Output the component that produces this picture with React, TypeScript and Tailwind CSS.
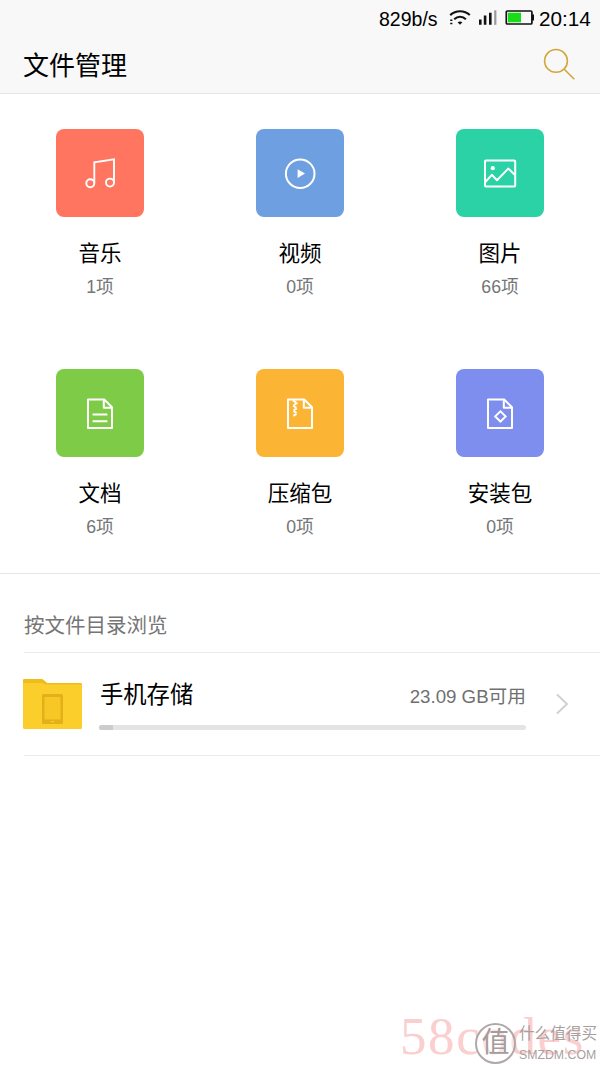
import type { ReactNode } from 'react';

const storage = { name: '手机存储', free: '23.09 GB可用', used: 3.2 };

function FileOutline({ children }: { children?: ReactNode }) {
  return (
    <svg width="36" height="36" viewBox="0 0 36 36" fill="none" stroke="white" strokeWidth="2" strokeLinejoin="round">
      <path d="M6 4.5H22.2L30 12.3V32.9H6Z" />
      <path d="M21.8 4.8V12.7H29.8" />
      {children}
    </svg>
  );
}

const MusicIcon = () => (
  <svg width="36" height="36" viewBox="0 0 36 36" fill="none" stroke="white" strokeWidth="1.9">
    <circle cx="8.3" cy="28.3" r="4" />
    <circle cx="28" cy="27.6" r="4" />
    <path d="M12.3 28.3V7.2L32 4.3V27.6" />
  </svg>
);

const VideoIcon = () => (
  <svg width="36" height="36" viewBox="0 0 36 36" fill="none">
    <circle cx="18.2" cy="18.7" r="14.3" stroke="white" strokeWidth="2" />
    <path d="M15.6 14.2L23 18.6L15.6 23Z" fill="white" />
  </svg>
);

const ImageIcon = () => (
  <svg width="36" height="36" viewBox="0 0 36 36" fill="none" stroke="white" strokeWidth="2" strokeLinejoin="round">
    <rect x="3" y="5.6" width="30.2" height="26" rx="1" />
    <path d="M3.5 26.8L9.8 19.8L15 25.2L26.2 13.6L33 20" />
    <circle cx="10.8" cy="13.2" r="2.1" fill="white" stroke="none" />
  </svg>
);

const DocIcon = () => (
  <FileOutline>
    <path d="M10.6 19.4H25.4M10.6 26.3H25.4" />
  </FileOutline>
);

const ZipIcon = () => (
  <FileOutline>
    <path d="M10.8 5.4L15 8L11 10.6L15 13.2L11 15.8L15 18.4L11.4 20.8" strokeWidth="2" strokeDasharray="3.9 1" />
  </FileOutline>
);

const ApkIcon = () => (
  <FileOutline>
    <path d="M18.4 16.3L23.6 21.4L18.4 26.5L13.2 21.4Z" strokeLinejoin="miter" />
  </FileOutline>
);

const categories = [
  { name: '音乐', count: '1项', color: 'bg-[#ff7560]', icon: <MusicIcon /> },
  { name: '视频', count: '0项', color: 'bg-[#6e9fe0]', icon: <VideoIcon /> },
  { name: '图片', count: '66项', color: 'bg-[#2ad2a5]', icon: <ImageIcon /> },
  { name: '文档', count: '6项', color: 'bg-[#7ecb47]', icon: <DocIcon /> },
  { name: '压缩包', count: '0项', color: 'bg-[#fbb433]', icon: <ZipIcon /> },
  { name: '安装包', count: '0项', color: 'bg-[#7e8eee]', icon: <ApkIcon /> },
];

function StatusBar() {
  return (
    <div className="flex h-9 items-center pl-[379px] text-black">
      <span className="w-[70px] pt-px text-[19.5px] leading-9">829b/s</span>
      <svg width="22" height="18" viewBox="0 0 22 18" fill="none" stroke="#111" strokeWidth="2.1">
        <path d="M1.2 6.1C7 0.9 15.2 0.9 20.8 6.1" />
        <path d="M5.2 10.2C8.8 7 13.4 7 16.9 10.2" />
        <path d="M8.6 13.3Q11 11.6 13.4 13.3L11 15.8Z" fill="#111" stroke="none" />
        <path d="M1.2 11.2H3.4M1.2 14.4H3.4" strokeWidth="1.5" />
      </svg>
      <svg className="ml-[7px]" width="20" height="16" viewBox="0 0 20 16">
        <path d="M1 9.5H3.6V14.8H1ZM5.8 5.5H8.4V14.8H5.8ZM11 2.8H13.6V14.8H11Z" fill="#111" />
        <path d="M16.2 0.3H18.4V14.8H16.2Z" fill="#999" />
      </svg>
      <svg className="ml-[7px]" width="30" height="16" viewBox="0 0 30 16">
        <rect x="1.3" y="1" width="25.6" height="13" rx="1" fill="none" stroke="#111" strokeWidth="1.7" />
        <rect x="3" y="2.7" width="13" height="9.6" fill="#19dc19" />
        <path d="M28 4.6V10.4" stroke="#111" strokeWidth="2" />
      </svg>
      <span className="ml-1 pt-px text-[20.7px] leading-9">20:14</span>
    </div>
  );
}

export default function App() {
  return (
    <div className="relative h-[1067px] w-[600px] overflow-hidden bg-white font-['Liberation_Sans','Noto_Sans_CJK_SC',sans-serif]">
      <header className="h-[94px] border-b border-[#e6e6e6] bg-[#f8f8f8]">
        <StatusBar />
        <div className="flex h-[57px] items-center justify-between pr-6 pl-6">
          <h1 className="-ml-px pt-[3px] text-[26px] leading-[57px] text-black">文件管理</h1>
          <svg width="34" height="34" viewBox="0 0 34 34" fill="none" stroke="#d2a638" strokeWidth="1.6">
            <circle cx="14" cy="12.9" r="11.4" />
            <path d="M22 21L32.3 31.2" />
          </svg>
        </div>
      </header>

      <section className="grid grid-cols-3 gap-y-[70px] border-b border-[#e6e6e6] pt-[35px] pb-[34px]">
        {categories.map((c) => (
          <div key={c.name} className="flex flex-col items-center">
            <div className={`flex h-[88px] w-[88px] items-center justify-center rounded-lg ${c.color}`}>{c.icon}</div>
            <div className="mt-[21px] text-[21.5px] leading-8 text-black">{c.name}</div>
            <div className="mt-[5px] text-[17.7px] leading-6 text-[#757575]">{c.count}</div>
          </div>
        ))}
      </section>

      <section className="pl-6">
        <h2 className="border-b border-[#ebebeb] pt-[37px] pb-[11px] text-[20.5px] leading-[30px] text-[#757575]">按文件目录浏览</h2>
        <div className="flex h-[103px] items-center border-b border-[#ebebeb]">
          <svg className="-ml-px shrink-0" width="59" height="50" viewBox="0 0 59 50">
            <path d="M0 1.5Q0 0 1.5 0H18Q19.5 0 20.5 1L24 4H57.5Q59 4 59 5.5V48.5Q59 50 57.5 50H1.5Q0 50 0 48.5Z" fill="#fbce2b" />
            <path d="M0 1.5Q0 0 1.5 0H18Q19.5 0 20.5 1L24 4H57.5Q59 4 59 5.5H22L19 4H0Z" fill="#efbc1c" />
            <rect x="19" y="15" width="21" height="30" rx="1.5" fill="#e3b01b" />
            <rect x="21.5" y="18" width="16" height="22.5" fill="#f6c725" />
            <rect x="27.5" y="42" width="4" height="1.3" fill="#f6c725" />
          </svg>
          <div className="ml-[17px] w-[427px]">
            <div className="flex h-9 items-center justify-between">
              <span className="pb-0.5 pl-px text-[23.3px] leading-9 text-black">{storage.name}</span>
              <span className="pt-0.5 text-[18.7px] leading-9 text-[#707070]">{storage.free}</span>
            </div>
            <div className="mt-[11px] h-[5px] overflow-hidden rounded-full bg-[#e4e4e4]">
              <div className="h-full bg-[#cccccc]" style={{ width: `${storage.used}%` }} />
            </div>
          </div>
          <svg className="ml-[29px]" width="14" height="22" viewBox="0 0 14 22" fill="none" stroke="#cfcfcf" strokeWidth="1.8">
            <path d="M2 1.5L12 11L2 20.5" />
          </svg>
        </div>
      </section>

      {/* watermarks */}
      <div className="absolute top-[1006px] left-[400px] font-['Liberation_Serif',serif] text-[53px] leading-[60px] tracking-[1.6px] text-[#fbcfcf]">58codes</div>
      <div className="absolute top-[1022px] left-[475px] flex items-center">
        <div className="flex h-[41px] w-[41px] items-center justify-center rounded-full border-2 border-[#b0a8a8] bg-white/40 text-[28px] leading-none text-[#a59c9c]">值</div>
        <div className="ml-[3px] text-[#a8a0a0]">
          <div className="text-[15.6px] leading-[24px] whitespace-nowrap">什么值得买</div>
          <div className="text-[12.3px] leading-[18px]">SMZDM.COM</div>
        </div>
      </div>
    </div>
  );
}
